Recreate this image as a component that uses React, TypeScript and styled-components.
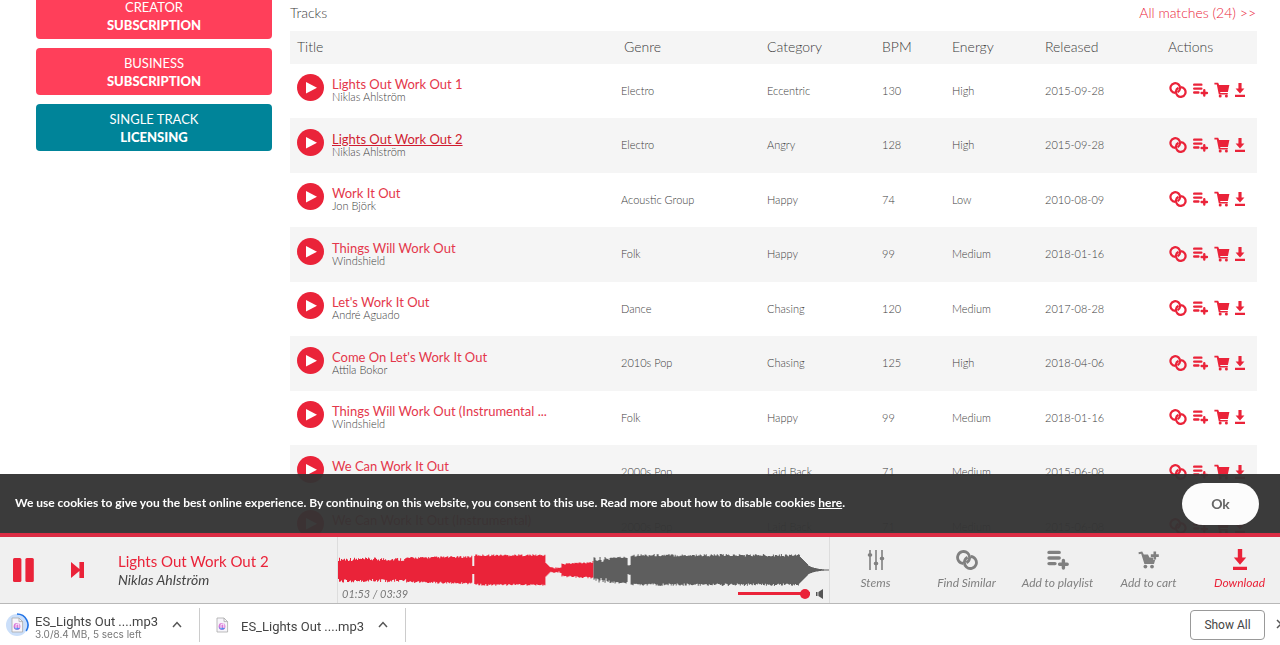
import React from "react";
import styled, { createGlobalStyle, css } from "styled-components";

const RED = "#ea2339";

const GlobalStyle = createGlobalStyle`
  * { box-sizing: border-box; }
  html, body { margin: 0; background: #fff; }
  body {
    font-family: Lato, "Noto Sans", sans-serif;
    color: #3c3c3c;
    overflow: hidden;
  }
  button { font-family: inherit; cursor: pointer; }
  a { color: inherit; text-decoration: none; }
`;

const Page = styled.div`
  display: flex;
  gap: 18px;
  height: 100vh;
  padding: 0 23px 0 36px;
  overflow: hidden;
`;

const Sidebar = styled.nav`
  display: flex;
  flex: 0 0 236px;
  flex-direction: column;
  gap: 9px;
  margin-top: -8px;
`;

const PlanLink = styled.a<{ $teal?: boolean }>`
  display: flex;
  flex-direction: column;
  align-items: center;
  justify-content: center;
  height: 47px;
  border-radius: 4px;
  background: ${(p) => (p.$teal ? "#008499" : "#ff3f5a")};
  color: #fff;
  font-size: 13px;
  line-height: 18px;
`;

const PlanStrong = styled.strong`
  font-size: 13px;
  font-weight: 900;
`;

const Results = styled.main`
  flex: 1;
  min-width: 0;
`;

const ResultsHead = styled.header`
  display: flex;
  justify-content: space-between;
  height: 31px;
  padding: 4px 1px 0 0;
  font-size: 14px;
  font-weight: 300;
  line-height: 18px;
`;

const SectionTitle = styled.h2`
  margin: 0;
  font-size: 14px;
  font-weight: 300;
`;

const AllLink = styled.a`
  color: ${RED};
`;

const TrackTable = styled.table`
  width: 100%;
  border-collapse: collapse;
  table-layout: fixed;
  font-weight: 300;
`;

const HeadCell = styled.th<{ $width?: number; $indent?: number }>`
  width: ${(p) => (p.$width ? `${p.$width}px` : "auto")};
  height: 33px;
  padding: 0 0 2px ${(p) => p.$indent ?? 7}px;
  background: #f5f5f5;
  font-size: 14px;
  font-weight: 300;
  text-align: left;
`;

const TrackRow = styled.tr`
  height: 54px;
  &:nth-child(even) {
    height: 55px;
    background: #f5f5f5;
  }
`;

const Cell = styled.td`
  padding: 0 0 2px 7px;
  font-size: 11px;
  white-space: nowrap;
`;

const TitleBox = styled.div`
  display: flex;
  align-items: center;
  gap: 8px;
  padding-bottom: 5px;
`;

const PlayButton = styled.button`
  display: grid;
  place-items: center;
  width: 27px;
  height: 27px;
  padding: 0;
  border: 0;
  border-radius: 50%;
  background: ${RED};
`;

const TrackNames = styled.div`
  display: flex;
  flex-direction: column;
  align-items: flex-start;
  padding-top: 5px;
`;

const TrackLink = styled.a<{ $active?: boolean }>`
  color: #e4374b;
  font-size: 13px;
  font-weight: 400;
  line-height: 14px;
  ${(p) => p.$active && css`text-decoration: underline; color: #d01c30;`}
`;

const Artist = styled.a`
  font-size: 11px;
  line-height: 12px;
`;

const Actions = styled.div`
  display: flex;
  align-items: center;
  gap: 5px;
  padding-left: 1px;
`;

const IconButton = styled.button`
  display: flex;
  padding: 0;
  border: 0;
  background: none;
  color: ${RED};
`;

const Dock = styled.div`
  position: fixed;
  right: 0;
  bottom: 0;
  left: 0;
`;

const CookieBar = styled.section`
  display: flex;
  align-items: center;
  justify-content: space-between;
  height: 59px;
  padding: 0 21px 0 15px;
  background: rgba(51, 51, 51, 0.96);
  color: #fff;
`;

const CookieText = styled.p`
  margin: 0;
  padding-bottom: 2px;
  font-size: 12px;
  font-weight: 700;
  a { text-decoration: underline; }
`;

const OkButton = styled.button`
  width: 77px;
  height: 42px;
  border: 0;
  border-radius: 21px;
  background: #fcfcfc;
  color: #666;
  font-size: 14px;
  font-weight: 700;
`;

const Player = styled.section`
  display: flex;
  height: 70px;
  border-top: 4px solid #dc2c44;
  background: #f0f0f0;
`;

const Transport = styled.div`
  display: flex;
  flex: 0 0 118px;
  align-items: center;
  gap: 35px;
  padding-left: 12px;
`;

const NowPlaying = styled.div`
  flex: 0 0 219px;
  padding-top: 14px;
`;

const NowTitle = styled.a`
  display: block;
  color: ${RED};
  font-size: 15px;
  line-height: 20px;
`;

const NowArtist = styled.a`
  display: block;
  color: #444;
  font-size: 14px;
  font-style: italic;
  line-height: 18px;
`;

const WavePanel = styled.div`
  display: flex;
  flex: 1;
  flex-direction: column;
  min-width: 0;
  padding-top: 16px;
  border-right: 1px solid #ddd;
  border-left: 1px solid #ddd;
  svg { display: block; }
`;

const WaveFoot = styled.div`
  display: flex;
  align-items: center;
  justify-content: space-between;
  height: 13px;
  padding: 0 5px 0 4px;
`;

const Time = styled.span`
  color: #777;
  font-size: 11px;
  font-style: italic;
`;

const Volume = styled.label`
  display: flex;
  align-items: center;
  gap: 5px;
`;

const VolumeSlider = styled.input`
  width: 72px;
  height: 10px;
  margin: 0;
  appearance: none;
  background: linear-gradient(${RED}, ${RED}) center / 100% 3px no-repeat;
  &::-webkit-slider-thumb {
    width: 10px;
    height: 10px;
    appearance: none;
    border-radius: 50%;
    background: ${RED};
  }
`;

const PlayerActions = styled.div`
  display: flex;
  flex: 0 0 450px;
  min-width: 0;
`;

const PlayerAction = styled.button<{ $hot?: boolean }>`
  display: flex;
  flex: 0 0 91px;
  flex-direction: column;
  align-items: center;
  justify-content: flex-start;
  gap: 3px;
  padding: 11px 0 0;
  border: 0;
  background: none;
  color: ${(p) => (p.$hot ? RED : "#808080")};
  font-size: 12px;
  font-style: italic;
  line-height: 18px;
  white-space: nowrap;
`;

const ActionIcon = styled.span`
  display: flex;
  align-items: center;
  height: 23px;
`;

const DownloadBar = styled.footer`
  display: flex;
  align-items: center;
  height: 42px;
  border-top: 1px solid #b8b8b8;
  background: #fff;
  color: #444;
  font-family: Roboto, sans-serif;
`;

const DownloadItem = styled.div<{ $width: number; $gap: number; $pad: number }>`
  display: flex;
  flex: 0 0 ${(p) => p.$width}px;
  align-items: center;
  gap: ${(p) => p.$gap}px;
  height: 34px;
  padding-left: ${(p) => p.$pad}px;
  border-right: 1px solid #ccc;
`;

const FileText = styled.div<{ $single?: boolean }>`
  padding-top: ${(p) => (p.$single ? 5 : 4)}px;
  font-size: 13px;
  line-height: 14px;
  white-space: nowrap;
  small {
    display: block;
    color: #777;
    font-family: Inter, sans-serif;
    font-size: 10px;
    line-height: 10px;
  }
`;

const MenuButton = styled.button<{ $gap: number }>`
  display: flex;
  margin-left: ${(p) => p.$gap}px;
  padding: 0;
  border: 0;
  background: none;
`;

const BarEnd = styled.div`
  display: flex;
  align-items: center;
  gap: 11px;
  margin-left: auto;
  overflow: hidden;
`;

const ShowAll = styled.button`
  width: 75px;
  height: 30px;
  padding: 0;
  border: 1px solid #999;
  border-radius: 4px;
  background: #fff;
  color: #444;
  font-size: 12px;
`;

const CloseButton = styled.button`
  width: 4px;
  padding: 0;
  border: 0;
  background: none;
  overflow: hidden;
`;

const RingsIcon = ({ width, height }: { width: number; height: number }) => (
  <svg width={width} height={height} viewBox="0 0 22 20" fill="none" stroke="currentColor" strokeWidth="2.8">
    <path d="M7.35 13.5A6 6 0 1 1 10.4 12.8" />
    <path d="M14.65 6.5A6 6 0 1 1 11.6 7.2" />
  </svg>
);

const PlaylistIcon = ({ width, height }: { width: number; height: number }) => (
  <svg width={width} height={height} viewBox="0 0 22 20" stroke="currentColor" strokeWidth="3.4" strokeLinecap="round">
    <path d="M2 2.4H12.2M2 8H12.2M2 13.6H8M12.6 14.2H20.2M16.4 10.4V18" />
  </svg>
);

const CartIcon = () => (
  <svg width="16" height="16" viewBox="0 0 16 16" fill="currentColor">
    <path d="M.4.8h3.8l.9 2.2h10.3l-1.5 7H6.2l.2 1h7.4v1.4H4.8L2.8 2.6H.4z" />
    <circle cx="6.2" cy="13.9" r="1.5" />
    <circle cx="12.4" cy="13.9" r="1.5" />
  </svg>
);

const CartPlusIcon = () => (
  <svg width="22" height="20" viewBox="0 0 22 20" fill="currentColor">
    <path d="M.5 2.2 4.2 1.4 5.8 4.6H10l1.4 3H15v2.2h2.2L16 14H6.4L3.2 3.8l-2.4.4z" />
    <path d="M16.8 1.6v8M12.8 5.6h8" fill="none" stroke="currentColor" strokeWidth="2.6" />
    <circle cx="7.4" cy="16.6" r="1.9" />
    <circle cx="14" cy="16.6" r="1.9" />
  </svg>
);

const DownloadIcon = ({ width, height }: { width: number; height: number }) => (
  <svg width={width} height={height} viewBox="0 0 14 21" preserveAspectRatio="none" fill="currentColor">
    <path d="M4.8 0h4.4v8.4h4L7 15.8.8 8.4h4zM0 17.8h14V21H0z" />
  </svg>
);

const StemsIcon = () => (
  <svg width="18" height="22" viewBox="0 0 18 22" stroke="currentColor" strokeWidth="1.6">
    <path d="M3 1v20M9 1v20M15 1v20" />
    <path d="M2.4 6h1.2M8.4 14.5h1.2M14.4 9.5h1.2" strokeWidth="3.4" strokeLinecap="round" />
  </svg>
);

const FileIcon = ({ progress }: { progress?: boolean }) => (
  <svg width={progress ? 24 : 16} height={progress ? 24 : 18} viewBox={progress ? "0 0 24 24" : "4 3 16 18"}>
    {progress && (
      <>
        <circle cx="12" cy="12" r="11" fill="#cbdffa" />
        <path d="M12 1a11 11 0 0 1 9.2 17" fill="none" stroke="#2173e6" strokeWidth="1.6" />
      </>
    )}
    <path d="M7 5h7l3.6 3.6V19H7z" fill="#f7f5fa" stroke="#aaa" strokeWidth=".8" />
    <path d="M14 5v3.6h3.6" fill="none" stroke="#aaa" strokeWidth=".8" />
    <circle cx="12" cy="13.4" r="3.4" fill="#d977d8" />
    <path d="M8.8 14.6a3.4 3.4 0 0 0 6.2.4z" fill="#4f8fee" />
    <path d="M11 15.4v-4l2.8-.6v4" fill="none" stroke="#fff" strokeWidth=".9" />
  </svg>
);

const ChevronUp = () => (
  <svg width="10" height="7" viewBox="0 0 10 7" fill="none" stroke="#555" strokeWidth="1.5">
    <path d="M1 6l4-4.4L9 6" />
  </svg>
);

const envelope = (x: number) => {
  const noise = Math.abs(Math.sin(x * 12.9898) * 43758.5453) % 1;
  if (x < 68) return 9 + noise * 3.5;
  if (x < 134) return 11 + noise * 2 + (x - 68) / 50;
  if (x < 136) return 4;
  if (x < 207) return 13.8 + noise * 2;
  if (x < 212) return 7 - (x - 207);
  if (x < 223) return 1.5 + noise * 1.5;
  if (x < 255) return 5 + noise * 2 + (x - 223) / 16;
  if (x < 271) return 8 + noise * 5;
  if (x < 289) return 11.5 + noise * 2;
  if (x < 292) return 4 + noise * 2;
  if (x < 461) return 13.5 + noise * 2.5;
  if (x < 469) return 13 - (x - 461);
  return Math.max(0.5, 4.5 * Math.exp(-(x - 469) / 8));
};

const wavePath = (from: number, to: number) => {
  let d = "";
  for (let x = from; x < to; x++) {
    const up = envelope(x);
    const down = envelope(x + 0.37);
    d += `M${x} ${(17 - up).toFixed(1)}h1V${(17 + down).toFixed(1)}h-1z`;
  }
  return d;
};

const Waveform = () => (
  <svg width="100%" height="34" viewBox="0 0 490 34" preserveAspectRatio="none" role="img" aria-label="Waveform">
    <path d={wavePath(0, 255)} fill={RED} />
    <path d={wavePath(255, 490)} fill="#5e5e5e" />
  </svg>
);

const tracks = [
  ["Lights Out Work Out 1", "Niklas Ahlström", "Electro", "Eccentric", "130", "High", "2015-09-28"],
  ["Lights Out Work Out 2", "Niklas Ahlström", "Electro", "Angry", "128", "High", "2015-09-28"],
  ["Work It Out", "Jon Björk", "Acoustic Group", "Happy", "74", "Low", "2010-08-09"],
  ["Things Will Work Out", "Windshield", "Folk", "Happy", "99", "Medium", "2018-01-16"],
  ["Let's Work It Out", "André Aguado", "Dance", "Chasing", "120", "Medium", "2017-08-28"],
  ["Come On Let's Work It Out", "Attila Bokor", "2010s Pop", "Chasing", "125", "High", "2018-04-06"],
  ["Things Will Work Out (Instrumental ...", "Windshield", "Folk", "Happy", "99", "Medium", "2018-01-16"],
  ["We Can Work It Out", "", "2000s Pop", "Laid Back", "71", "Medium", "2015-06-08"],
  ["We Can Work It Out (Instrumental)", "", "2000s Pop", "Laid Back", "71", "Medium", "2015-06-08"],
];

export default function App() {
  return (
    <>
      <GlobalStyle />
      <Page>
        <Sidebar>
          <PlanLink href="#creator">CREATOR<PlanStrong>SUBSCRIPTION</PlanStrong></PlanLink>
          <PlanLink href="#business">BUSINESS<PlanStrong>SUBSCRIPTION</PlanStrong></PlanLink>
          <PlanLink href="#single" $teal>SINGLE TRACK<PlanStrong>LICENSING</PlanStrong></PlanLink>
        </Sidebar>
        <Results>
          <ResultsHead>
            <SectionTitle>Tracks</SectionTitle>
            <AllLink href="#all">All matches (24) &gt;&gt;</AllLink>
          </ResultsHead>
          <TrackTable>
            <thead>
              <tr>
                <HeadCell>Title</HeadCell>
                <HeadCell $width={146} $indent={10}>Genre</HeadCell>
                <HeadCell $width={115}>Category</HeadCell>
                <HeadCell $width={70}>BPM</HeadCell>
                <HeadCell $width={93}>Energy</HeadCell>
                <HeadCell $width={123}>Released</HeadCell>
                <HeadCell $width={96}>Actions</HeadCell>
              </tr>
            </thead>
            <tbody>
              {tracks.map(([title, artist, ...facts], i) => (
                <TrackRow key={title}>
                  <Cell>
                    <TitleBox>
                      <PlayButton aria-label={`Play ${title}`}>
                        <svg width="27" height="27" viewBox="0 0 27 27" fill="#fff"><path d="M9 8l11 5.7L9 19.4z" /></svg>
                      </PlayButton>
                      <TrackNames>
                        <TrackLink href="#track" $active={i === 1}>{title}</TrackLink>
                        <Artist href="#artist">{artist || "\u00a0"}</Artist>
                      </TrackNames>
                    </TitleBox>
                  </Cell>
                  {facts.map((fact, n) => <Cell key={n}>{fact}</Cell>)}
                  <Cell>
                    <Actions>
                      <IconButton aria-label="Find similar"><RingsIcon width={18} height={16} /></IconButton>
                      <IconButton aria-label="Add to playlist"><PlaylistIcon width={17} height={14} /></IconButton>
                      <IconButton aria-label="Add to cart"><CartIcon /></IconButton>
                      <IconButton aria-label="Download"><DownloadIcon width={10} height={14} /></IconButton>
                    </Actions>
                  </Cell>
                </TrackRow>
              ))}
            </tbody>
          </TrackTable>
        </Results>
      </Page>
      <Dock>
        <CookieBar>
          <CookieText>
            We use cookies to give you the best online experience. By continuing on this website, you consent to this use. Read more about how to disable cookies <a href="#cookies">here</a>.
          </CookieText>
          <OkButton>Ok</OkButton>
        </CookieBar>
        <Player>
          <Transport>
            <IconButton aria-label="Pause">
              <svg width="22" height="24" viewBox="0 0 22 24" fill="currentColor"><rect x="1" width="8.4" height="24" rx="1.5" /><rect x="13.4" width="8.4" height="24" rx="1.5" /></svg>
            </IconButton>
            <IconButton aria-label="Next track">
              <svg width="16" height="18" viewBox="0 0 16 18" fill="currentColor"><path d="M2 1l8.4 7V1H15v16h-4.6v-7L2 17z" /></svg>
            </IconButton>
          </Transport>
          <NowPlaying>
            <NowTitle href="#track">Lights Out Work Out 2</NowTitle>
            <NowArtist href="#artist">Niklas Ahlström</NowArtist>
          </NowPlaying>
          <WavePanel>
            <Waveform />
            <WaveFoot>
              <Time>01:53 / 03:39</Time>
              <Volume>
                <VolumeSlider type="range" defaultValue={100} aria-label="Volume" />
                <svg width="9" height="10" viewBox="0 0 9 10" fill="#555"><path d="M1 3h1.5v4H1zM3.4 3L8 0v10L3.4 7z" /></svg>
              </Volume>
            </WaveFoot>
          </WavePanel>
          <PlayerActions>
            <PlayerAction><ActionIcon><StemsIcon /></ActionIcon>Stems</PlayerAction>
            <PlayerAction><ActionIcon><RingsIcon width={22} height={20} /></ActionIcon>Find Similar</PlayerAction>
            <PlayerAction><ActionIcon><PlaylistIcon width={22} height={20} /></ActionIcon>Add to playlist</PlayerAction>
            <PlayerAction><ActionIcon><CartPlusIcon /></ActionIcon>Add to cart</PlayerAction>
            <PlayerAction $hot><ActionIcon><DownloadIcon width={14} height={21} /></ActionIcon>Download</PlayerAction>
          </PlayerActions>
        </Player>
        <DownloadBar>
          <DownloadItem $width={200} $gap={6} $pad={5}>
            <FileIcon progress />
            <FileText>ES_Lights Out ....mp3<small>3.0/8.4 MB, 5 secs left</small></FileText>
            <MenuButton $gap={8} aria-label="Download options"><ChevronUp /></MenuButton>
          </DownloadItem>
          <DownloadItem $width={206} $gap={11} $pad={14}>
            <FileIcon />
            <FileText $single>ES_Lights Out ....mp3</FileText>
            <MenuButton $gap={3} aria-label="Download options"><ChevronUp /></MenuButton>
          </DownloadItem>
          <BarEnd>
            <ShowAll>Show All</ShowAll>
            <CloseButton aria-label="Close">
              <svg width="10" height="10" viewBox="0 0 10 10" stroke="#555" strokeWidth="1.5"><path d="M1 1l8 8M9 1L1 9" /></svg>
            </CloseButton>
          </BarEnd>
        </DownloadBar>
      </Dock>
    </>
  );
}
